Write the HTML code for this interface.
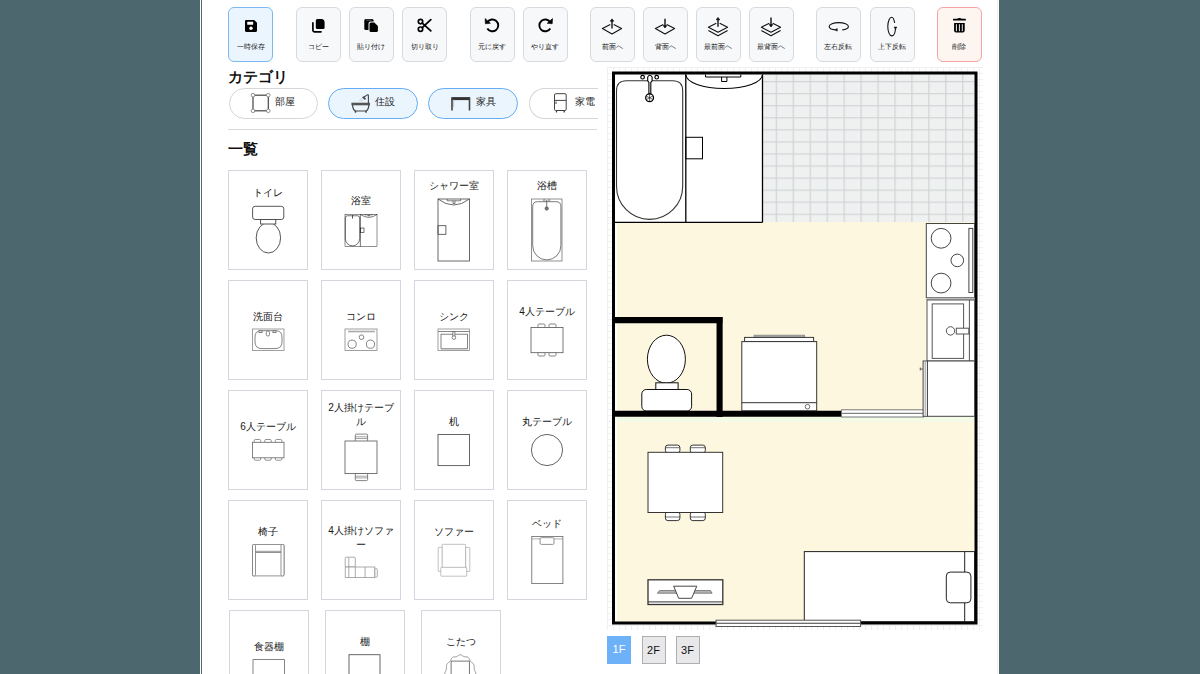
<!DOCTYPE html>
<html><head><meta charset="utf-8">
<style>
*{box-sizing:border-box;margin:0;padding:0}
html,body{width:1200px;height:674px;overflow:hidden;background:#4d676f;font-family:"Liberation Sans",sans-serif;color:#222}
.a{position:absolute}
#page{position:absolute;left:200px;top:0;width:799px;height:674px;background:#fff;overflow:hidden}
#lb1{position:absolute;left:201px;top:0;width:1px;height:674px;background:#4d676f}
#rb1{position:absolute;left:997px;top:0;width:1px;height:674px;background:#eef0f0}
.tb{position:absolute;top:7px;width:45px;height:54.5px;border:1px solid #d6d9de;border-radius:6px;background:#f7f8fa}
.tb svg{position:absolute;left:15px;top:11px;width:14px;height:14px}
.tb span{position:absolute;left:-6px;right:-6px;top:33.6px;text-align:center;font-size:7.3px;line-height:9px;color:#161616;white-space:nowrap}
.tb.sel{border-color:#7cb9f4;background:#ebf5fe}
.tb.del{border:1.5px solid #f7a3a3;background:#fdf5f0}
.h{position:absolute;font-weight:bold;color:#111;white-space:nowrap}
.pill{position:absolute;top:88px;width:89.5px;height:31px;border:1.5px solid #d3d6da;border-radius:16px;background:#fff}
.pill.sel{border:1.8px solid #64adf6;background:#eaf5fe}
.pill span{position:absolute;left:46px;top:7.5px;font-size:10px;line-height:12px;color:#1c1c1c;white-space:nowrap}
.pill svg{position:absolute;left:0;top:0}
.card{position:absolute;width:80px;height:100px;border:1px solid #d4d8de;background:#fff}
.card span{position:absolute;left:-4px;right:-4px;text-align:center;font-size:10px;line-height:12px;color:#161616}
.card svg{position:absolute}
#plan{position:absolute;left:407px;top:67px;width:376px;height:563px}
.fb{position:absolute;top:636px;width:24px;height:27.5px;font-size:11px;line-height:26px;text-align:center;font-weight:normal}
</style></head><body>
<div id="page"></div>
<div id="lb1"></div>
<div id="rb1"></div>

<!-- toolbar -->
<div class="tb sel" style="left:228px"><svg viewBox="0 0 14 14"><path d="M1 2.2C1 1.5 1.5 1 2.2 1h8L13 3.8v8c0 .7-.5 1.2-1.2 1.2H2.2C1.5 13 1 12.5 1 11.8z" fill="#000"/><rect x="3.2" y="2.8" width="6" height="3" rx=".6" fill="#fff"/><circle cx="7" cy="9.3" r="1.7" fill="#fff"/></svg><span>一時保存</span></div>
<div class="tb" style="left:295.8px"><svg viewBox="0 0 45 54" style="left:-1px;top:-1px;width:45px;height:54px"><path d="M21.3 12H25.4Q28.6 12 28.6 15.5V20.4Q28.6 21.9 27.1 21.9H21.3Q19.8 21.9 19.8 20.4V13.5Q19.8 12 21.3 12Z" fill="#000"/><path d="M16.9 15.8V23.2Q16.9 24.8 18.5 24.8H25" stroke="#000" stroke-width="1.7" fill="none" stroke-linecap="round"/></svg><span>コピー</span></div>
<div class="tb" style="left:348.7px"><svg viewBox="0 0 45 54" style="left:-1px;top:-1px;width:45px;height:54px"><rect x="15.3" y="12" width="9.3" height="11.1" rx="1.6" fill="#000"/><path d="M17.2 13.1H22.7" stroke="#888" stroke-width=".8"/><path d="M21.5 14.5H25.7L30 18.6V24.2Q30 26.2 28 26.2H21.5Q19.5 26.2 19.5 24.2V16.5Q19.5 14.5 21.5 14.5Z" fill="#f7f8fa"/><path d="M22 15.6H25.3L28.9 19V23.6Q28.9 25.1 27.4 25.1H22Q20.5 25.1 20.5 23.6V17.1Q20.5 15.6 22 15.6Z" fill="#000"/></svg><span>貼り付け</span></div>
<div class="tb" style="left:402px"><svg viewBox="0 0 45 54" style="left:-1px;top:-1px;width:45px;height:54px"><circle cx="18.5" cy="14.6" r="2.2" stroke="#000" stroke-width="1.7" fill="none"/><circle cx="18.5" cy="22.2" r="2.2" stroke="#000" stroke-width="1.7" fill="none"/><path d="M20.3 16.2L28.8 23.8M20.3 20.6L28.8 12.6" stroke="#000" stroke-width="1.8" stroke-linecap="round"/></svg><span>切り取り</span></div>
<div class="tb" style="left:469.5px"><svg viewBox="0 0 45 54" style="left:-1px;top:-1px;width:45px;height:54px"><path d="M17.4 15.2A5.9 5.9 0 1 1 17.29 21.45" stroke="#000" stroke-width="1.9" fill="none"/><path d="M15.1 11.6L15.4 16.8 20.4 16.3Z" fill="#000" stroke="#000" stroke-width=".6" stroke-linejoin="round"/></svg><span>元に戻す</span></div>
<div class="tb" style="left:522.5px"><svg viewBox="0 0 45 54" style="left:-1px;top:-1px;width:45px;height:54px"><path d="M27.2 15.2A5.9 5.9 0 1 0 27.31 21.45" stroke="#000" stroke-width="1.9" fill="none"/><path d="M29.5 11.6L29.2 16.8 24.2 16.3Z" fill="#000" stroke="#000" stroke-width=".6" stroke-linejoin="round"/></svg><span>やり直す</span></div>
<div class="tb" style="left:589.7px"><svg viewBox="0 0 45 54" style="left:-1px;top:-1px;width:45px;height:54px"><path d="M20.3 17.5L12.4 21.6 22 27 31.6 21.6 23.7 17.5" stroke="#111" fill="none" stroke-width="1.1" stroke-linejoin="round"/><path d="M22 21.4V13.5" stroke="#111" fill="none" stroke-width="1.4"/><path d="M20.3 14.2L22 11.9 23.7 14.2Z" fill="#111" stroke="#111" stroke-width=".8"/></svg><span>前面へ</span></div>
<div class="tb" style="left:642.7px"><svg viewBox="0 0 45 54" style="left:-1px;top:-1px;width:45px;height:54px"><path d="M20.3 17.5L12.4 21.6 22 27 31.6 21.6 23.7 17.5" stroke="#111" fill="none" stroke-width="1.1" stroke-linejoin="round"/><path d="M22 11.8V19.5" stroke="#111" fill="none" stroke-width="1.4"/><path d="M20.3 18.6L22 21 23.7 18.6Z" fill="#111" stroke="#111" stroke-width=".8"/></svg><span>背面へ</span></div>
<div class="tb" style="left:695.6px"><svg viewBox="0 0 45 54" style="left:-1px;top:-1px;width:45px;height:54px"><path d="M20.3 16.2L12.4 20.2 22 25.2 31.6 20.2 23.7 16.2" stroke="#111" fill="none" stroke-width="1.1" stroke-linejoin="round"/><path d="M12.4 23.6L22 28.8 31.6 23.6" stroke="#111" fill="none" stroke-width="1.1" stroke-linejoin="round"/><path d="M22 19.8V12" stroke="#111" fill="none" stroke-width="1.4"/><path d="M20.3 12.8L22 10.5 23.7 12.8Z" fill="#111" stroke="#111" stroke-width=".8"/></svg><span>最前面へ</span></div>
<div class="tb" style="left:748.6px"><svg viewBox="0 0 45 54" style="left:-1px;top:-1px;width:45px;height:54px"><path d="M20.3 16.2L12.4 20.2 22 25.2 31.6 20.2 23.7 16.2" stroke="#111" fill="none" stroke-width="1.1" stroke-linejoin="round"/><path d="M12.4 23.6L22 28.8 31.6 23.6" stroke="#111" fill="none" stroke-width="1.1" stroke-linejoin="round"/><path d="M22 10.6V18.4" stroke="#111" fill="none" stroke-width="1.4"/><path d="M20.3 17.6L22 20 23.7 17.6Z" fill="#111" stroke="#111" stroke-width=".8"/></svg><span>最背面へ</span></div>
<div class="tb" style="left:815.8px"><svg viewBox="0 0 45 54" style="left:-1px;top:-1px;width:45px;height:54px"><path d="M19.6 22.9C15.8 22.5 13.2 21.1 13.2 19.4 13.2 17.3 17.5 15.6 22.8 15.6S32.4 17.3 32.4 19.4C32.4 21 30 22.4 26.3 22.9" stroke="#111" fill="none" stroke-width="1.1"/><path d="M21.2 21.6L19.2 22.9 21.2 24.1Z" fill="#111" stroke="#111" stroke-width=".7"/></svg><span>左右反転</span></div>
<div class="tb" style="left:869.7px"><svg viewBox="0 0 45 54" style="left:-1px;top:-1px;width:45px;height:54px"><path d="M24.7 15.9C24 12.3 22.9 10.2 21.7 10.2 19.6 10.2 17.8 14.4 17.8 19.55S19.6 28.9 21.7 28.9C23.6 28.9 25.2 25.8 25.5 21.5" stroke="#111" fill="none" stroke-width="1.1"/><path d="M24.2 20.1L25.5 22.2 26.7 20.1Z" fill="#111" stroke="#111" stroke-width=".7"/></svg><span>上下反転</span></div>
<div class="tb del" style="left:936.9px"><svg viewBox="0 0 45 54" style="left:-1px;top:-1px;width:45px;height:54px"><path d="M16.8 12.7H28.1" stroke="#000" stroke-width="1.7" stroke-linecap="round"/><path d="M19.6 12.4Q20.3 10.9 22.45 10.9T25.3 12.4Z" fill="#000"/><path d="M17.1 16H27.7V23.5Q27.7 25.4 25.8 25.4H19Q17.1 25.4 17.1 23.5Z" fill="#000"/><path d="M19.4 17.6V23.8M22.4 17.6V23.8M25.3 17.6V23.8" stroke="#eee" stroke-width="1" stroke-linecap="round"/></svg><span>削除</span></div>

<!-- category -->
<div class="h" style="left:228px;top:67px;font-size:15px;line-height:19px">カテゴリ</div>
<div class="pill" style="left:228.5px"><svg width="90" height="31" viewBox="0 0 90 31" style="left:-1.5px;top:-1.5px"><g stroke="#444" stroke-width="1.2" fill="#fff"><rect x="25" y="7.2" width="15.3" height="15.6" fill="none"/><circle cx="25" cy="7.2" r="1.8" stroke-width=".8" stroke="#777"/><circle cx="40.3" cy="7.2" r="1.8" stroke-width=".8" stroke="#777"/><circle cx="25" cy="22.8" r="1.8" stroke-width=".8" stroke="#777"/><circle cx="40.3" cy="22.8" r="1.8" stroke-width=".8" stroke="#777"/></g></svg><span style="left:45.5px;top:7px">部屋</span></div>
<div class="pill sel" style="left:328.2px;width:90px"><svg width="90" height="31" viewBox="0 0 90 31" style="left:-1.8px;top:-1.8px"><g stroke="#444" fill="none" transform="translate(1.2,1.5)"><path d="M23.2 15.5H41.8" stroke-width="2.6" stroke="#555"/><path d="M24.3 16.5Q24.8 22.5 28 22.5H37Q40.2 22.5 40.7 16.5" stroke-width="1.2"/><path d="M27.3 22.5V24.3M37.8 22.5V24.3" stroke-width="1.5"/><path d="M40.2 14.5V7.2Q40.2 5.8 38.8 6.6L35.8 8.5" stroke-width="1.1"/><path d="M34.5 8.4L37.3 10.8" stroke-width="1.8"/><path d="M33.5 10.2L33 10.8M32 11.8L31.4 12.4M34 12L33.5 12.6" stroke-width=".8" stroke="#777"/></g></svg><span style="left:46px;top:7.3px">住設</span></div>
<div class="pill sel" style="left:428.2px;width:90px"><svg width="90" height="31" viewBox="0 0 90 31" style="left:-1.8px;top:-1.8px"><g fill="none" stroke="#333" transform="translate(1.4,1.2)"><path d="M23 10.4H41.7" stroke-width="3"/><path d="M23.6 9.5V22.2M41.1 9.5V22.2" stroke-width="1.6" stroke="#444"/><path d="M25.3 11.5V19" stroke-width=".6" stroke="#aaa"/></g></svg><span style="left:46.5px;top:7.3px">家具</span></div>
<div class="pill" style="left:528.5px;width:69px;border-radius:16px 0 0 16px;border-right:none"><svg width="90" height="31" viewBox="0 0 90 31" style="left:-1.5px;top:-1.5px"><g fill="#fff" stroke="#444" stroke-width="1"><rect x="26.5" y="5.7" width="11.7" height="16.8" rx="1.2"/><path d="M26.5 12.4H38.2M28 13.5V16" fill="none"/><path d="M28.5 22.5V24.5M36.2 22.5V24.5" stroke-width="1.3" fill="none"/></g></svg><span style="left:45.5px;top:7px">家電</span></div>
<div class="a" style="left:228px;top:129px;width:369px;height:1.2px;background:#d6dade"></div>
<div class="h" style="left:228px;top:140px;font-size:14.5px;line-height:18px">一覧</div>

<div id="cards">
<div class="card" style="left:228px;top:170px"><span style="top:15.9px">トイレ</span><svg width="80" height="100" viewBox="0 0 80 100" style="left:-1px;top:-1px"><g stroke="#444" stroke-width="0.9" fill="#fff">
<rect x="24.6" y="36.3" width="31.2" height="13.2" rx="2.5"/>
<ellipse cx="40.4" cy="67.8" rx="12.2" ry="15.2"/>
<rect x="32.6" y="49.5" width="15.2" height="4.5"/></g></svg></div>
<div class="card" style="left:321px;top:170px"><span style="top:24.4px">浴室</span><svg width="80" height="100" viewBox="0 0 80 100" style="left:-1px;top:-1px"><g transform="translate(24,44.4) scale(0.217) translate(-615,-74.5)"><g stroke="#000" fill="none">
<rect x="615" y="74.5" width="147.5" height="147.8" fill="#fff" stroke-width="2"/>
<path d="M685.8 74.5V222.3" stroke-width="2.5"/>
<path d="M616.5 90.8Q616.5 80.8 626.5 80.8H672.7Q682.7 80.8 682.7 90.8V186.3A33.1 33.1 0 0 1 616.5 186.3Z" stroke-width="2.5"/>
<path d="M649.6 78V94" stroke-width="3"/>
<path d="M685.8 74.5Q724.2 102 762.5 74.5" stroke-width="2.5"/>
<path d="M705.5 74.5V77H740.8V74.5M721.6 77V81.5H726.9V77" stroke-width="2"/>
<rect x="685.8" y="137.3" width="16.7" height="21.5" stroke-width="2.5"/>
</g></g></svg></div>
<div class="card" style="left:414px;top:170px"><span style="top:9.2px">シャワー室</span><svg width="80" height="100" viewBox="0 0 80 100" style="left:-1px;top:-1px"><g stroke="#444" stroke-width="0.8" fill="#fff">
<rect x="24" y="29" width="31.5" height="62"/>
<path d="M24 29Q39.75 41 55.5 29" fill="none"/>
<path d="M33.2 29V30.8H46.6V29M39 30.8V33.5H41V30.8" fill="none" stroke-width="0.7"/>
<rect x="24" y="55.7" width="7.9" height="8.6" fill="none"/>
</g></svg></div>
<div class="card" style="left:507px;top:170px"><span style="top:9.2px">浴槽</span><svg width="80" height="100" viewBox="0 0 80 100" style="left:-1px;top:-1px"><g stroke="#444" stroke-width="0.8" fill="#fff">
<rect x="24.5" y="29" width="30.5" height="62" stroke="#777"/>
<path d="M25.7 36.5Q25.7 31.7 30.5 31.7H49.1Q53.9 31.7 53.9 36.5V75.8A14.1 14.1 0 0 1 25.7 75.8Z" stroke="#555"/>
<path d="M39.7 30V37.5" stroke-width="0.7"/>
<circle cx="37.3" cy="30.2" r="0.9" stroke-width="0.5"/><circle cx="42.1" cy="30.2" r="0.9" stroke-width="0.5"/>
<circle cx="39.7" cy="38.5" r="1.7" fill="#777" stroke-width="0.6"/>
</g></svg></div>
<div class="card" style="left:228px;top:280px"><span style="top:29.9px">洗面台</span><svg width="80" height="100" viewBox="0 0 80 100" style="left:-1px;top:-1px"><g stroke="#666" stroke-width="0.8" fill="#fff">
<rect x="24.5" y="49" width="31.5" height="21.5" stroke="#888"/>
<path d="M27 57Q27 50.7 33 50.7H48Q54 50.7 54 57V62Q54 68.6 47 68.6H34Q27 68.6 27 62Z"/>
<rect x="38.3" y="51" width="3.2" height="5" rx="1.5"/>
<rect x="31" y="50.8" width="3" height="1.8" fill="#fff"/><rect x="45" y="50.8" width="3" height="1.8"/>
</g></svg></div>
<div class="card" style="left:321px;top:280px"><span style="top:29.9px">コンロ</span><svg width="80" height="100" viewBox="0 0 80 100" style="left:-1px;top:-1px"><g stroke="#666" stroke-width="0.8" fill="#fff">
<rect x="24" y="49" width="32" height="21.5" stroke="#888"/>
<rect x="27" y="50.7" width="26.9" height="1.6" fill="#aaa" stroke="none"/>
<circle cx="31.1" cy="64.2" r="4.1"/><circle cx="49.5" cy="64.2" r="4.1"/><circle cx="40.5" cy="57.2" r="2.3"/>
</g></svg></div>
<div class="card" style="left:414px;top:280px"><span style="top:29.9px">シンク</span><svg width="80" height="100" viewBox="0 0 80 100" style="left:-1px;top:-1px"><g stroke="#666" stroke-width="0.8" fill="#fff">
<rect x="24" y="49" width="31.5" height="21.5" stroke="#888"/>
<path d="M24 51.5H55.5" fill="none"/>
<rect x="27" y="54.2" width="26.4" height="14.4"/>
<rect x="38.9" y="51.5" width="2" height="5"/>
<circle cx="39.9" cy="57.6" r="1.8"/>
<rect x="27" y="68.6" width="26.4" height="1.4" fill="#ccc" stroke="none"/>
</g></svg></div>
<div class="card" style="left:507px;top:280px"><span style="top:25.4px">4人テーブル</span><svg width="80" height="100" viewBox="0 0 80 100" style="left:-1px;top:-1px"><g stroke="#666" stroke-width="0.8" fill="#fff">
<rect x="31.00" y="44.00" width="7" height="4" rx="1.2"/><rect x="31.00" y="72.00" width="7" height="4" rx="1.2"/><rect x="42.00" y="44.00" width="7" height="4" rx="1.2"/><rect x="42.00" y="72.00" width="7" height="4" rx="1.2"/>
<rect x="24" y="47.4" width="32" height="25.3" stroke="#555"/>
</g></svg></div>
<div class="card" style="left:228px;top:390px"><span style="top:30.4px">6人テーブル</span><svg width="80" height="100" viewBox="0 0 80 100" style="left:-1px;top:-1px"><g stroke="#777" stroke-width="0.8" fill="#fff">
<rect x="26.15" y="49.50" width="6.5" height="3.5" rx="1.2"/><rect x="26.15" y="66.70" width="6.5" height="3.5" rx="1.2"/><rect x="36.75" y="49.50" width="6.5" height="3.5" rx="1.2"/><rect x="36.75" y="66.70" width="6.5" height="3.5" rx="1.2"/><rect x="47.35" y="49.50" width="6.5" height="3.5" rx="1.2"/><rect x="47.35" y="66.70" width="6.5" height="3.5" rx="1.2"/>
<rect x="24.5" y="52.3" width="31.5" height="15.5" stroke="#666"/>
</g></svg></div>
<div class="card" style="left:321px;top:390px"><span style="top:9.8px;line-height:14px">2人掛けテーブ<br>ル</span><svg width="80" height="100" viewBox="0 0 80 100" style="left:-1px;top:-1px"><g stroke="#666" stroke-width="0.8" fill="#fff">
<rect x="34.3" y="44.1" width="12.3" height="7.5" rx="1"/><path d="M34.3 46.8H46.6M34.3 48.5H46.6" fill="none" stroke-width="0.6"/>
<rect x="34.3" y="83" width="12.3" height="7.6" rx="1"/><path d="M34.3 86.2H46.6M34.3 87.9H46.6" fill="none" stroke-width="0.6"/>
<rect x="24" y="51" width="32" height="32.6" stroke="#555"/>
</g></svg></div>
<div class="card" style="left:414px;top:390px"><span style="top:25.4px">机</span><svg width="80" height="100" viewBox="0 0 80 100" style="left:-1px;top:-1px"><rect x="24" y="44.5" width="31.5" height="31.1" stroke="#555" stroke-width="0.9" fill="#fff"/></svg></div>
<div class="card" style="left:507px;top:390px"><span style="top:25.4px">丸テーブル</span><svg width="80" height="100" viewBox="0 0 80 100" style="left:-1px;top:-1px"><circle cx="40" cy="60" r="15.6" stroke="#555" stroke-width="0.9" fill="#fff"/></svg></div>
<div class="card" style="left:228px;top:500px"><span style="top:25.4px">椅子</span><svg width="80" height="100" viewBox="0 0 80 100" style="left:-1px;top:-1px"><g stroke="#777" stroke-width="0.8" fill="#fff">
<rect x="24.5" y="44.5" width="31.5" height="31.4" rx="1"/>
<path d="M27.5 51.3H53M27.5 52.5H53" fill="none"/>
<rect x="24.5" y="44.5" width="3" height="31.4" rx="1.2"/>
<rect x="53" y="44.5" width="3" height="31.4" rx="1.2"/>
</g></svg></div>
<div class="card" style="left:321px;top:500px"><span style="top:22.7px;line-height:14px">4人掛けソファ<br>ー</span><svg width="80" height="100" viewBox="0 0 80 100" style="left:-1px;top:-1px"><g stroke="#888" stroke-width="0.7" fill="#fff">
<rect x="24.2" y="57.2" width="10.1" height="9.8" rx="1"/>
<rect x="24.2" y="67" width="29.7" height="10.6"/>
<path d="M34.3 67V77.6M44.1 67V77.6M27.8 57.5V77.3" fill="none"/>
<rect x="53.9" y="68.6" width="2.4" height="8.6" rx=".8"/>
</g></svg></div>
<div class="card" style="left:414px;top:500px"><span style="top:24.9px">ソファー</span><svg width="80" height="100" viewBox="0 0 80 100" style="left:-1px;top:-1px"><g stroke="#999" stroke-width="0.6" fill="#fff">
<rect x="24.2" y="47.4" width="4.2" height="24" rx=".5"/>
<rect x="51.6" y="47.4" width="4.2" height="24" rx=".5"/>
<rect x="28.2" y="44.3" width="23.4" height="23.3" rx=".6"/>
<rect x="26.8" y="67.3" width="25.9" height="8.9" rx=".6"/>
</g></svg></div>
<div class="card" style="left:507px;top:500px"><span style="top:16.8px">ベッド</span><svg width="80" height="100" viewBox="0 0 80 100" style="left:-1px;top:-1px"><g stroke="#666" stroke-width="0.8" fill="#fff">
<rect x="24.8" y="36.5" width="31.1" height="47.1"/>
<path d="M24.8 38.9H55.9" fill="none" stroke="#999"/>
<rect x="33.1" y="37.7" width="13.9" height="6.7" rx="1.2" stroke="#777"/>
</g></svg></div>
<div class="card" style="left:228.5px;top:610px"><span style="top:30.4px">食器棚</span><svg width="80" height="100" viewBox="0 0 80 100" style="left:-1px;top:-1px"><rect x="24" y="49.6" width="31.5" height="31.5" stroke="#666" stroke-width="0.8" fill="#fff"/></svg></div>
<div class="card" style="left:325px;top:610px"><span style="top:25.4px">棚</span><svg width="80" height="100" viewBox="0 0 80 100" style="left:-1px;top:-1px"><rect x="24" y="44.7" width="31" height="31" stroke="#555" stroke-width="0.9" fill="#fff"/></svg></div>
<div class="card" style="left:421.4px;top:610px"><span style="top:24.9px">こたつ</span><svg width="80" height="100" viewBox="0 0 80 100" style="left:-1px;top:-1px"><g stroke="#777" stroke-width="0.7" fill="#fff">
<path d="M39.30 44.75L40.31 44.98L41.26 45.56L42.15 46.21L43.05 46.66L44.00 46.82L45.04 46.82L46.10 46.91L47.06 47.33L47.84 48.15L48.43 49.24L48.95 50.36L49.54 51.31L50.30 52.04L51.20 52.68L52.08 53.41L52.75 54.37L53.09 55.57L53.16 56.88L53.15 58.17L53.28 59.35L53.65 60.46L54.17 61.57L54.64 62.75L54.82 64.00L54.64 65.25L54.17 66.43L53.65 67.54L53.28 68.65L53.15 69.83L53.16 71.12L53.09 72.43L52.75 73.63L52.08 74.59L51.20 75.32L50.30 75.96L49.54 76.69L48.95 77.64L48.43 78.76L47.84 79.85L47.06 80.67L46.10 81.09L45.04 81.18L44.00 81.18L43.05 81.34L42.15 81.79L41.26 82.44L40.31 83.02L39.30 83.25L38.29 83.02L37.34 82.44L36.45 81.79L35.55 81.34L34.60 81.18L33.56 81.18L32.50 81.09L31.54 80.67L30.76 79.85L30.17 78.76L29.65 77.64L29.06 76.69L28.30 75.96L27.40 75.32L26.52 74.59L25.85 73.63L25.51 72.43L25.44 71.12L25.45 69.83L25.32 68.65L24.95 67.54L24.43 66.43L23.96 65.25L23.77 64.00L23.96 62.75L24.43 61.57L24.95 60.46L25.32 59.35L25.45 58.17L25.44 56.88L25.51 55.57L25.85 54.37L26.52 53.41L27.40 52.68L28.30 52.04L29.06 51.31L29.65 50.36L30.17 49.24L30.76 48.15L31.54 47.33L32.50 46.91L33.56 46.82L34.60 46.82L35.55 46.66L36.45 46.21L37.34 45.56L38.29 44.98Z"/>
<rect x="30.1" y="51.1" width="18.3" height="25" stroke="#666" stroke-width="0.9"/>
</g></svg></div>
</div>
<svg class="a" style="left:0;top:0" width="1200" height="674" viewBox="0 0 1200 674">
<defs>
<pattern id="fine" x="607" y="67" width="6" height="6" patternUnits="userSpaceOnUse"><path d="M0 .5H6M.5 0V6" stroke="#eef0f2" stroke-width="1" fill="none"/></pattern>
<pattern id="grid" x="758.75" y="69.05" width="16.95" height="12.05" patternUnits="userSpaceOnUse"><rect width="16.95" height="12.05" fill="#eff1f1"/><path d="M0 .6H16.95M.6 0V12.05" stroke="#d0d3d5" stroke-width="1.3" fill="none"/></pattern>
</defs>
<rect x="607" y="67" width="376" height="563" fill="#fff"/>
<rect x="607" y="67" width="376" height="563" fill="url(#fine)"/>
<!-- floors -->
<rect x="615" y="74.5" width="359.5" height="547" fill="#fff"/>
<rect x="617" y="222" width="357.5" height="399.5" fill="#fef7df"/>
<rect x="617" y="417" width="357.5" height="5" fill="#f3fae6"/>
<rect x="763" y="74.5" width="211.5" height="147.5" fill="url(#grid)"/>
<!-- bath/shower -->
<g stroke="#000" fill="none">
<path d="M685.8 74.5V222.3M762.5 74.5V222.3M615 222.3H762.5" stroke-width="1.3"/>
<path d="M616.5 90.8Q616.5 80.8 626.5 80.8H672.7Q682.7 80.8 682.7 90.8V186.3A33.1 33.1 0 0 1 616.5 186.3Z" stroke="#333" stroke-width="1.1"/>
<circle cx="642.6" cy="77.2" r="1.8" stroke-width="1.2"/>
<circle cx="656.7" cy="77.2" r="1.8" stroke-width="1.2"/>
<path d="M647.7 77Q649.9 73.6 652.1 77V80.8L650.8 82.4V93.5H648.9V82.4L647.7 80.8Z" stroke-width="1.1" fill="#fff"/>
<circle cx="649.6" cy="97.7" r="3.9" stroke-width="1.3"/>
<path d="M649.6 94.2V101.2M646.3 96L652.9 99.5M652.9 96L646.3 99.5" stroke-width=".6"/>
<path d="M685.8 74.5A38.35 14 0 0 0 762.5 74.5" stroke-width="1.1"/>
<path d="M705.5 74.5V77H740.8V74.5M721.6 77V81.5H726.9V77" stroke-width="1"/>
<rect x="685.8" y="137.3" width="16.7" height="21.5" stroke-width="1"/>
</g>
<!-- toilet -->
<g stroke="#111" stroke-width="1" fill="#fff">
<ellipse cx="666.4" cy="359.2" rx="19" ry="24"/>
<rect x="655.8" y="382.8" width="22.3" height="7"/>
<rect x="641.8" y="389.5" width="49.8" height="21.5" rx="4.5"/>
</g>
<!-- walls -->
<rect x="613.5" y="73" width="362.5" height="550" fill="none" stroke="#000" stroke-width="3"/>
<path d="M612 320.1H722.8M719.6 317.1V416.9M612 413.8H841.5" stroke="#000" stroke-width="6.1" fill="none"/>
<!-- washer -->
<g stroke="#333" stroke-width="1" fill="#fff">
<rect x="754" y="335.1" width="50.7" height="2.6" fill="#aaa" stroke="#777" stroke-width=".6"/>
<rect x="744.6" y="337.4" width="69" height="4.2"/>
<rect x="741.8" y="341.6" width="74.9" height="69.1"/>
<path d="M741.8 402.7H816.7" fill="none"/>
<circle cx="807.5" cy="406.7" r="2.3" stroke-width=".7"/>
</g>
<!-- sliding door middle -->
<g stroke="#777" stroke-width="1" fill="#fff">
<rect x="841.5" y="409.8" width="82" height="3.6"/>
<rect x="841.5" y="413.4" width="82" height="3.6"/>
</g>
<!-- stove -->
<g stroke="#444" stroke-width="1" fill="#fff">
<rect x="926.3" y="223.5" width="48.2" height="74.2"/>
<circle cx="941.1" cy="238.3" r="9.9"/>
<circle cx="941.1" cy="283.1" r="9.9"/>
<circle cx="957.3" cy="260.4" r="6.3"/>
<rect x="968.9" y="228.4" width="3.9" height="64.1"/>
</g>
<rect x="926.3" y="297.7" width="48.2" height="2.3" fill="#bbb"/>
<!-- sink cabinet -->
<g stroke="#555" stroke-width="1" fill="#fff">
<rect x="927" y="300" width="47.6" height="61"/>
<rect x="932.2" y="303.9" width="31.4" height="54.5"/>
<path d="M969.4 300V361" fill="none"/>
<rect x="956.3" y="328.2" width="12.5" height="5.8"/>
<circle cx="950.5" cy="330.9" r="4.2"/>
</g>
<!-- fridge -->
<g stroke="#444" stroke-width="1" fill="#fff">
<rect x="927.4" y="361" width="47.2" height="55.3"/>
<rect x="923.1" y="361" width="4.3" height="55.3"/>
<path d="M925.2 362V415.5" stroke="#999" fill="none"/>
<path d="M919.8 369H923M920.3 367.5V370.5" fill="none" stroke-width=".8"/>
</g>
<!-- dining table -->
<g stroke="#333" stroke-width="1" fill="#fff">
<rect x="665.4" y="445.1" width="14.5" height="8" rx="2.5"/>
<rect x="690.3" y="445.1" width="15" height="8" rx="2.5"/>
<rect x="665.4" y="511.8" width="14.5" height="8.8" rx="2.5"/>
<rect x="690.3" y="511.8" width="15" height="8.8" rx="2.5"/>
<path d="M665.4 447.7H679.9M690.3 447.7H705.3M665.4 517H679.9M690.3 517H705.3" stroke-width=".7" fill="none"/>
<rect x="648" y="452.3" width="74.7" height="60.2"/>
</g>
<!-- tv stand -->
<g stroke="#333" stroke-width="1" fill="#fff">
<rect x="648" y="579.8" width="74.8" height="24.7" stroke-width="1.3"/>
<path d="M648 601.9H722.8" fill="none"/>
<path d="M659.5 590.6H710.5L712.1 593.2H657.4Z" fill="#bbb" stroke="#555" stroke-width=".7"/>
<path d="M673.7 586.2H696.8L691.6 598.3H678.7Z" stroke-width=".9"/>
</g>
<!-- bed -->
<g stroke="#222" stroke-width="1" fill="#fff">
<rect x="804.3" y="551.6" width="170.2" height="70"/>
<path d="M964.7 551.6V621.6" fill="none"/>
<rect x="946.3" y="572.1" width="24.6" height="30.7" rx="4"/>
</g>
<!-- bottom sliding door -->
<g stroke="#555" stroke-width="1" fill="#fff">
<rect x="716.1" y="620.2" width="144.5" height="3.2"/>
<rect x="716.1" y="623.3" width="144.5" height="3.2"/>
</g>
</svg>

<div class="fb" style="left:607px;background:#6db1f8;color:#fff">1F</div>
<div class="fb" style="left:641.5px;background:#e8e8ea;border:1px solid #aeaeae;color:#111">2F</div>
<div class="fb" style="left:675.5px;background:#e8e8ea;border:1px solid #aeaeae;color:#111">3F</div>
</body></html>
